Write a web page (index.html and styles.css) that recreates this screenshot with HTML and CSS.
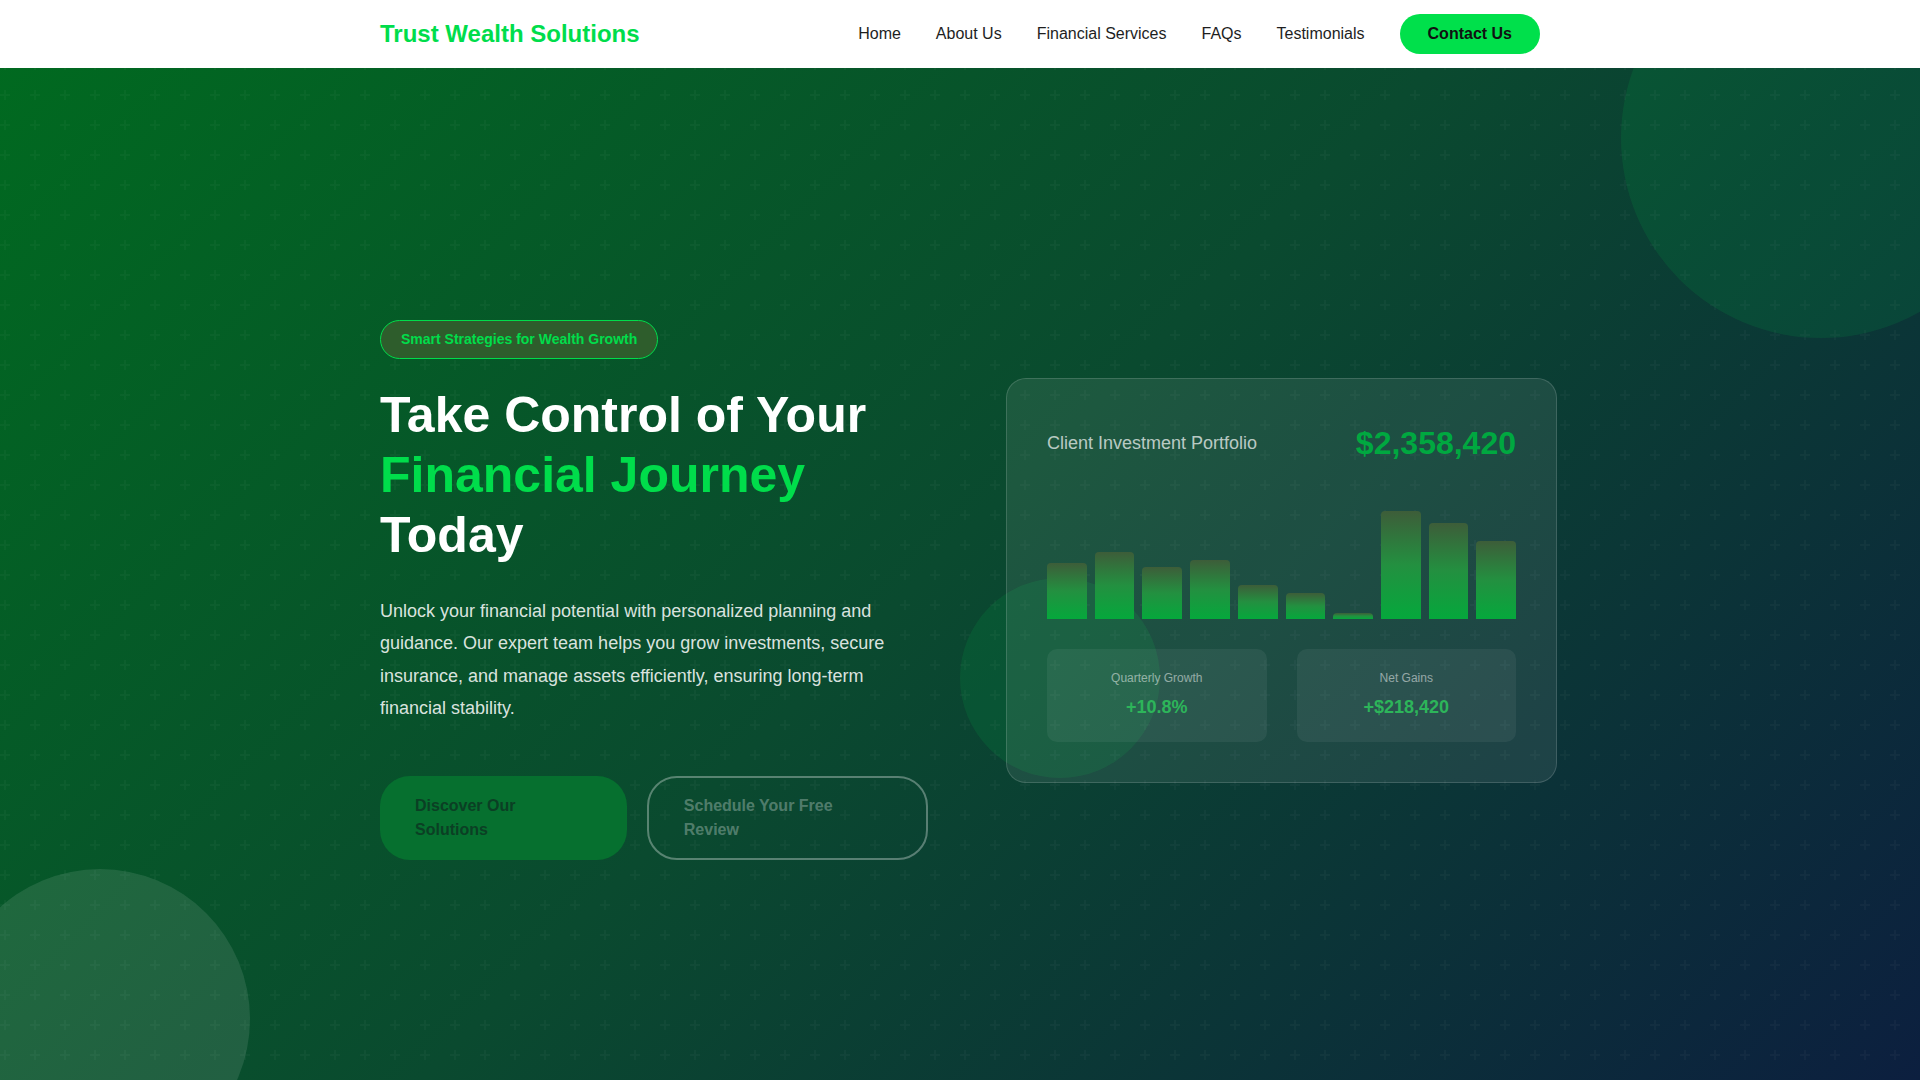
FILE: index.html
```html
<!DOCTYPE html>
<html lang="en">
<head>
<meta charset="utf-8">
<title>Trust Wealth Solutions</title>
<link rel="stylesheet" href="styles.css">
</head>
<body>
<div class="page">
  <svg class="pattern" aria-hidden="true">
    <defs>
      <pattern id="plus" width="60" height="60" patternUnits="userSpaceOnUse">
        <path fill="#ffffff" fill-opacity="0.028" d="M36 34v-4h-2v4h-4v2h4v4h2v-4h4v-2h-4zm0-30V0h-2v4h-4v2h4v4h2V6h4V4h-4zM6 34v-4H4v4H0v2h4v4h2v-4h4v-2H6zM6 4V0H4v4H0v2h4v4h2V6h4V4H6z"/>
      </pattern>
    </defs>
    <rect width="100%" height="100%" fill="url(#plus)"/>
  </svg>
  <div class="blob blob-tr"></div>
  <div class="blob blob-bl"></div>
  <div class="blob blob-mid"></div>

  <header class="topbar">
    <div class="topbar-inner">
      <a class="logo" href="#">Trust Wealth Solutions</a>
      <nav class="menu">
        <a href="#">Home</a>
        <a href="#">About Us</a>
        <a href="#">Financial Services</a>
        <a href="#">FAQs</a>
        <a href="#">Testimonials</a>
        <a class="contact-btn" href="#">Contact Us</a>
      </nav>
    </div>
  </header>

  <section class="hero">
    <div class="hero-inner">
      <div class="hero-text">
        <span class="badge">Smart Strategies for Wealth Growth</span>
        <h1 class="title">Take Control of Your <span class="accent">Financial Journey</span> Today</h1>
        <p class="lead">Unlock your financial potential with personalized planning and guidance. Our expert team helps you grow investments, secure insurance, and manage assets efficiently, ensuring long-term financial stability.</p>
        <div class="actions">
          <a class="btn btn-primary" href="#">Discover Our Solutions</a>
          <a class="btn btn-outline" href="#">Schedule Your Free Review</a>
        </div>
      </div>

      <div class="card">
        <div class="card-head">
          <span class="card-title">Client Investment Portfolio</span>
          <span class="card-value">$2,358,420</span>
        </div>
        <div class="chart">
          <div class="bar" style="height:47%"></div>
          <div class="bar" style="height:56%"></div>
          <div class="bar" style="height:43%"></div>
          <div class="bar" style="height:49%"></div>
          <div class="bar" style="height:28%"></div>
          <div class="bar" style="height:22%"></div>
          <div class="bar" style="height:5%"></div>
          <div class="bar" style="height:90%"></div>
          <div class="bar" style="height:80%"></div>
          <div class="bar" style="height:65%"></div>
        </div>
        <div class="stats">
          <div class="stat">
            <div class="stat-label">Quarterly Growth</div>
            <div class="stat-value">+10.8%</div>
          </div>
          <div class="stat">
            <div class="stat-label">Net Gains</div>
            <div class="stat-value">+$218,420</div>
          </div>
        </div>
      </div>
    </div>
  </section>
</div>
</body>
</html>
```
FILE: styles.css
```css
* { box-sizing: border-box; }

body {
  margin: 0;
  font-family: "Liberation Sans", Arial, sans-serif;
}

a { text-decoration: none; }

.page {
  position: relative;
  min-height: 100vh;
  overflow: hidden;
  background: linear-gradient(135deg, #006b1f 0%, #0a4a2f 50%, #0c1f3f 100%);
}

.pattern {
  position: absolute;
  top: 0;
  left: 0;
  width: 100%;
  height: 100%;
  z-index: 0;
}

.blob {
  position: absolute;
  border-radius: 50%;
  z-index: 0;
}

.blob-tr {
  width: 400px;
  height: 400px;
  top: -62px;
  right: -101px;
  background: rgba(0, 224, 75, 0.1);
}

.blob-bl {
  width: 300px;
  height: 300px;
  top: 869px;
  left: -50px;
  background: rgba(255, 255, 255, 0.1);
}

.blob-mid {
  width: 200px;
  height: 200px;
  top: 578px;
  left: 50%;
  background: rgba(0, 224, 75, 0.1);
}

/* ---------- top bar ---------- */
.topbar {
  position: relative;
  z-index: 3;
  height: 68px;
  background: #ffffff;
}

.topbar-inner {
  max-width: 1200px;
  height: 100%;
  margin: 0 auto;
  padding: 0 20px;
  display: flex;
  align-items: center;
  justify-content: space-between;
}

.logo {
  font-size: 24px;
  font-weight: 700;
  color: #00dd4b;
}

.menu {
  display: flex;
  align-items: center;
  gap: 35px;
}

.menu a {
  font-size: 16px;
  color: #1e1e1e;
}

.menu a.contact-btn {
  display: block;
  padding: 10px 28px;
  line-height: 20px;
  border-radius: 20px;
  background: #00e04b;
  color: #111111;
  font-weight: 700;
}

/* ---------- hero ---------- */
.hero {
  position: relative;
  z-index: 1;
}

.hero-inner {
  max-width: 1200px;
  margin: 0 auto;
  padding: 252px 20px 0;
  display: grid;
  grid-template-columns: 548px 551px;
  column-gap: 78px;
  align-items: start;
}

.badge {
  display: inline-block;
  padding: 10px 20px;
  line-height: 17px;
  font-size: 14px;
  font-weight: 700;
  color: #00dd4b;
  background: #2e5d2c;
  border: 1px solid #00dd4b;
  border-radius: 20px;
}

.title {
  margin: 26px 0 0;
  font-size: 50px;
  line-height: 60px;
  font-weight: 700;
  color: #ffffff;
}

.accent {
  color: #00dd4b;
}

.lead {
  margin: 30px 0 0;
  max-width: 540px;
  font-size: 18px;
  line-height: 1.8;
  color: rgba(255, 255, 255, 0.86);
}

.actions {
  display: flex;
  gap: 20px;
  margin-top: 51px;
}

.btn {
  display: block;
  flex: 0 1 auto;
  padding: 16px 35px;
  font-size: 16px;
  line-height: 24px;
  font-weight: 700;
  border-radius: 30px;
  text-align: left;
  border: 2px solid transparent;
}

.btn-primary {
  padding-left: 33px;
  padding-right: 33px;
  background: #06702f;
  color: #0b3f24;
}

.btn-outline {
  border-color: rgba(255, 255, 255, 0.32);
  color: rgba(255, 255, 255, 0.3);
}

/* ---------- card ---------- */
.card {
  margin-top: 58px;
  padding: 40px;
  border: 1px solid rgba(255, 255, 255, 0.15);
  border-radius: 20px;
  background: rgba(255, 255, 255, 0.08);
}

.card-head {
  display: flex;
  align-items: center;
  justify-content: space-between;
  height: 48px;
}

.card-title {
  font-size: 18px;
  color: rgba(255, 255, 255, 0.7);
}

.card-value {
  font-size: 32px;
  font-weight: 700;
  color: #00a840;
}

.chart {
  display: flex;
  align-items: flex-end;
  gap: 8px;
  height: 120px;
  margin-top: 32px;
}

.bar {
  flex: 1;
  border-radius: 4px 4px 0 0;
  background: linear-gradient(to top, #05a83c 0%, #239040 50%, #3d5d39 100%);
}

.stats {
  display: grid;
  grid-template-columns: 1fr 1fr;
  gap: 30px;
  margin-top: 30px;
}

.stat {
  padding: 20px;
  border-radius: 10px;
  background: rgba(255, 255, 255, 0.06);
  text-align: center;
}

.stat-label {
  font-size: 12px;
  line-height: 18px;
  color: rgba(255, 255, 255, 0.5);
}

.stat-value {
  margin-top: 5px;
  font-size: 18px;
  line-height: 30px;
  font-weight: 700;
  color: #2db55a;
}
```
